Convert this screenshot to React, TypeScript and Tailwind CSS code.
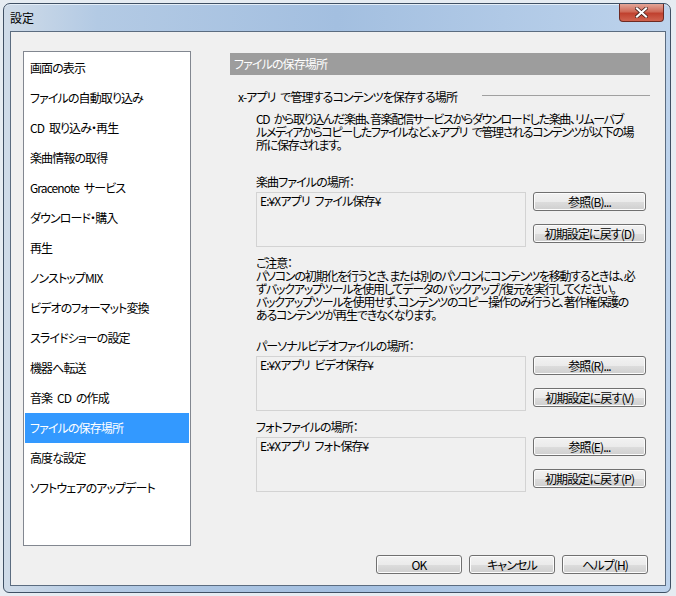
// Settings dialog (Windows 7 style) for x-アプリ
const menuItems = [
  '画面の表示',
  'ファイルの自動取り込み',
  'CD 取り込み・再生',
  '楽曲情報の取得',
  'Gracenote サービス',
  'ダウンロード・購入',
  '再生',
  'ノンストップMIX',
  'ビデオのフォーマット変換',
  'スライドショーの設定',
  '機器へ転送',
  '音楽 CD の作成',
  'ファイルの保存場所',
  '高度な設定',
  'ソフトウェアのアップデート',
];

const SELECTED = 'ファイルの保存場所';

function WinButton({ children, className = '' }: { children: React.ReactNode; className?: string }) {
  return (
    <button
      type="button"
      className={`h-[19px] rounded-[3px] border border-[#707070] bg-[linear-gradient(to_bottom,#f2f2f2_0%,#ebebeb_50%,#dddddd_51%,#cfcfcf_100%)] shadow-[inset_0_0_0_1px_#fcfcfc] text-[12px] leading-[17px] text-black flex items-center justify-center ${className}`}
    >
      {children}
    </button>
  );
}

function LocationRow({ path, browse, reset }: { path: string; browse: string; reset: string }) {
  return (
    <div className="flex mt-[4px]">
      <div className="w-[270px] h-[55px] border border-[#d3d3d3] bg-[#f0f0f0] px-[3px] pt-[1px] leading-[13px] whitespace-pre">
        {path}
      </div>
      <div className="ml-[7px] flex flex-col gap-[13px]">
        <WinButton className="w-[113px]">{browse}</WinButton>
        <WinButton className="w-[113px]">{reset}</WinButton>
      </div>
    </div>
  );
}

function SideList() {
  return (
    <div className="w-[168px] h-[495px] shrink-0 border border-[#828790] bg-white p-[1px] flex flex-col">
      {menuItems.map((item) => (
        <div
          key={item}
          className={`h-[30px] shrink-0 flex items-center pl-[5px] whitespace-pre ${
            item === SELECTED ? 'bg-[#3399ff] text-white' : 'text-black'
          }`}
        >
          {item}
        </div>
      ))}
    </div>
  );
}

function StoragePanel() {
  return (
    <div className="w-[420px] shrink-0 ml-[39px] mt-[2px] flex flex-col">
      <div className="h-[22px] bg-[#9d9d9d] text-white pl-[4px] flex items-center">ファイルの保存場所</div>

      <div className="mt-[14px] h-[16px] flex items-center justify-between pl-[8px]">
        <span className="whitespace-pre">x-アプリ で管理するコンテンツを保存する場所</span>
        <div className="w-[168px] h-px bg-[#a0a0a0] -mt-[3px]" />
      </div>

      <div className="pl-[26px] flex flex-col">
        <p className="mt-[7px] leading-[13px] whitespace-nowrap tracking-[-1.3px]">
          CD から取り込んだ楽曲、音楽配信サービスからダウンロードした楽曲、リムーバブ
          <br />
          ルメディアからコピーしたファイルなど、x-アプリ で管理されるコンテンツが以下の場
          <br />
          所に保存されます。
        </p>

        <div className="mt-[24px] leading-[13px]">楽曲ファイルの場所：</div>
        <LocationRow path="E:¥Xアプリ ファイル保存¥" browse="参照(B)..." reset="初期設定に戻す(D)" />

        <p className="mt-[9px] leading-[13px] whitespace-nowrap tracking-[-1.2px]">
          ご注意：
          <br />
          パソコンの初期化を行うとき、または別のパソコンにコンテンツを移動するときは、必
          <br />
          ずバックアップツールを使用してデータのバックアップ/復元を実行してください。
          <br />
          バックアップツールを使用せず、コンテンツのコピー操作のみ行うと、著作権保護の
          <br />
          あるコンテンツが再生できなくなります。
        </p>

        <div className="mt-[18px] leading-[13px]">パーソナルビデオファイルの場所：</div>
        <LocationRow path="E:¥Xアプリ ビデオ保存¥" browse="参照(R)..." reset="初期設定に戻す(V)" />

        <div className="mt-[9px] leading-[13px]">フォトファイルの場所：</div>
        <LocationRow path="E:¥Xアプリ フォト保存¥" browse="参照(E)..." reset="初期設定に戻す(P)" />
      </div>
    </div>
  );
}

export default function App() {
  return (
    <div className="w-[676px] h-[596px] overflow-hidden bg-[#e6ecf2] pt-[3px] pl-[3px] text-[12px] tracking-[-0.9px] [word-spacing:3px] text-black font-['Noto_Sans_CJK_JP','Noto_Sans',sans-serif] [font-feature-settings:'palt']">
      <div className="w-[668px] h-[590px] rounded-t-[7px] rounded-b-[6px] border border-[#3f5064] bg-[linear-gradient(to_right,#cfdbe8_0%,#b3cae4_14%,#a3bfe0_50%,#bdd3ec_100%)] flex flex-col shadow-[inset_0_1px_0_#e4eef8]">
        {/* title bar */}
        <div className="h-[27px] shrink-0 flex items-start justify-between">
          <span className="mt-[7px] ml-[6px] leading-[13px] tracking-normal">設定</span>
          <div className="mt-0 mr-[6px] w-[45px] h-[18px] rounded-b-[4px] border border-t-0 border-[#6e2a22] bg-[linear-gradient(to_bottom,#e3a698_0%,#cf6a58_45%,#c0412f_55%,#d0634f_100%)] flex items-center justify-center">
            <svg width="13" height="11" viewBox="0 0 13 11">
              <path d="M2 1.5 L11 9.5 M11 1.5 L2 9.5" stroke="#3a1a16" strokeWidth="3.6" strokeLinecap="square" />
              <path d="M2 1.5 L11 9.5 M11 1.5 L2 9.5" stroke="#ffffff" strokeWidth="2.2" strokeLinecap="square" />
            </svg>
          </div>
        </div>

        {/* client area */}
        <div className="ml-[6px] mr-[4px] h-[555px] shrink-0 border border-[#5b6c80] bg-[#f0f0f0] flex flex-col pt-[19px] pl-[12px]">
          <div className="flex items-start">
            <SideList />
            <StoragePanel />
          </div>
          <div className="mt-[9px] pr-[17px] flex justify-end gap-[7px]">
            <WinButton className="w-[86px] border-[#3c7fb1] bg-[linear-gradient(to_bottom,#eef5fa_0%,#e3eef7_50%,#d4e4f1_51%,#c9dced_100%)]">
              OK
            </WinButton>
            <WinButton className="w-[86px]">キャンセル</WinButton>
            <WinButton className="w-[86px]">ヘルプ(H)</WinButton>
          </div>
        </div>
      </div>
    </div>
  );
}
